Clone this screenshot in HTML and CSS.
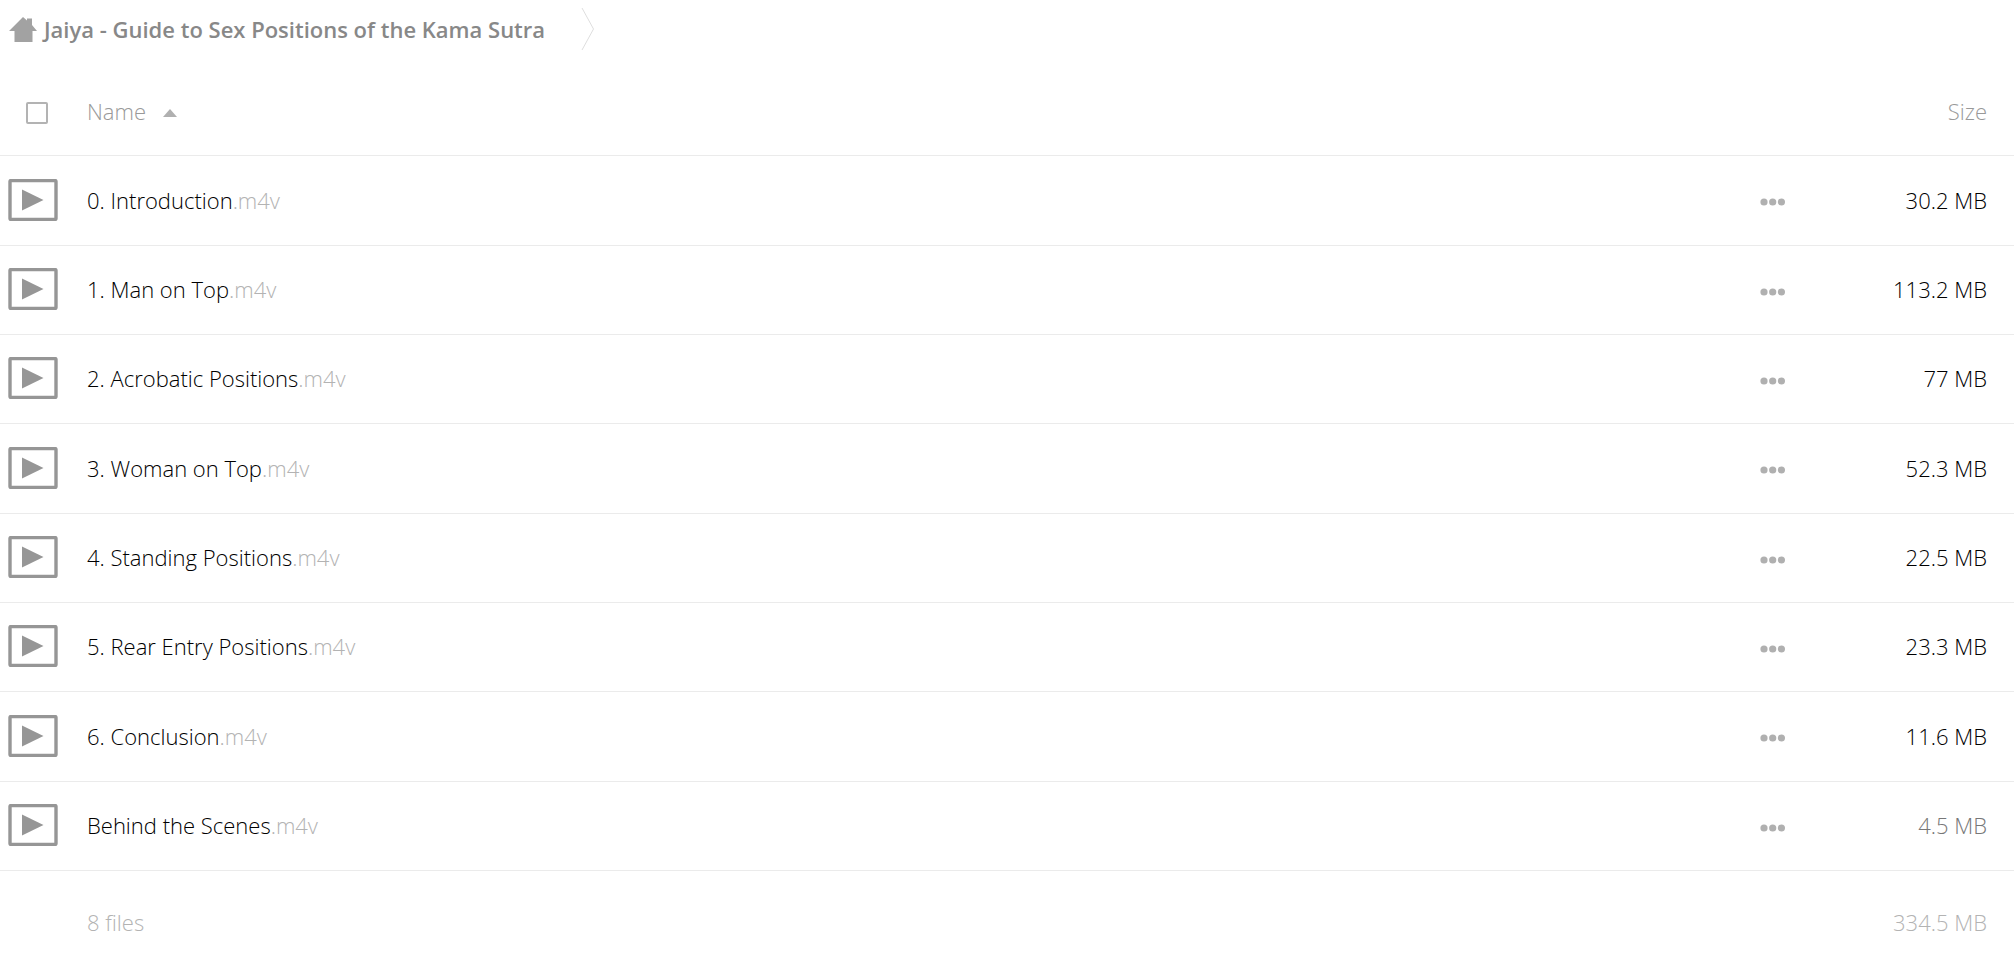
FILE: index.html
```html
<!DOCTYPE html>
<html lang="en">
<head>
    <meta charset="UTF-8">
    <meta name="viewport" content="width=device-width, initial-scale=1.0">
    <title>Files</title>
    <link rel="stylesheet" href="styles.css">
</head>
<body>
    <svg class="symbols" aria-hidden="true">
        <symbol id="video" viewBox="0 0 50 42">
            <rect x="2" y="1.5" width="46" height="39" rx="1" fill="none" stroke="#969696" stroke-width="3.4"/>
            <path d="M14 10.5v21l21.500-10.500z" fill="#969696"/>
        </symbol>
        <symbol id="dots" viewBox="0 0 26 8">
            <circle cx="4" cy="4" r="3.600" fill="#b0b0b0"/>
            <circle cx="12.700" cy="4" r="3.600" fill="#b0b0b0"/>
            <circle cx="21.400" cy="4" r="3.600" fill="#b0b0b0"/>
        </symbol>
    </svg>

    <nav class="breadcrumb">
        <a class="home" href="#" aria-label="Home">
            <svg width="28" height="25" viewBox="0 0 28 25"><path d="M14 0l4 3.500V1.500h5v6.500l5 6h-4.500V25h-18V14H0z" fill="#a2a2a2"/></svg>
        </a>
        <a class="crumb" href="#">Jaiya - Guide to Sex Positions of the Kama Sutra</a>
        <svg class="separator" width="14" height="42" viewBox="0 0 14 42"><path d="M1 0l11.500 21L1 42" fill="none" stroke="#dedede"/></svg>
    </nav>

    <table class="files">
        <thead>
            <tr>
                <th class="icon"><input class="select-all" type="checkbox" aria-label="Select all"></th>
                <th class="name"><button class="sort">Name <svg width="14" height="8" viewBox="0 0 14 8"><path d="M7 0l7 8H0z" fill="#b0b0b0"/></svg></button></th>
                <th class="actions"></th>
                <th class="size"><button class="sort">Size</button></th>
            </tr>
        </thead>
        <tbody>
            <tr>
                <td class="icon"><svg width="50" height="42"><use href="#video"/></svg></td>
                <td class="name"><a href="#">0. Introduction<span class="ext">.m4v</span></a></td>
                <td class="actions"><button class="more" aria-label="More"><svg width="26" height="8"><use href="#dots"/></svg></button></td>
                <td class="size">30.2 MB</td>
            </tr>
            <tr>
                <td class="icon"><svg width="50" height="42"><use href="#video"/></svg></td>
                <td class="name"><a href="#">1. Man on Top<span class="ext">.m4v</span></a></td>
                <td class="actions"><button class="more" aria-label="More"><svg width="26" height="8"><use href="#dots"/></svg></button></td>
                <td class="size">113.2 MB</td>
            </tr>
            <tr>
                <td class="icon"><svg width="50" height="42"><use href="#video"/></svg></td>
                <td class="name"><a href="#">2. Acrobatic Positions<span class="ext">.m4v</span></a></td>
                <td class="actions"><button class="more" aria-label="More"><svg width="26" height="8"><use href="#dots"/></svg></button></td>
                <td class="size">77 MB</td>
            </tr>
            <tr>
                <td class="icon"><svg width="50" height="42"><use href="#video"/></svg></td>
                <td class="name"><a href="#">3. Woman on Top<span class="ext">.m4v</span></a></td>
                <td class="actions"><button class="more" aria-label="More"><svg width="26" height="8"><use href="#dots"/></svg></button></td>
                <td class="size">52.3 MB</td>
            </tr>
            <tr>
                <td class="icon"><svg width="50" height="42"><use href="#video"/></svg></td>
                <td class="name"><a href="#">4. Standing Positions<span class="ext">.m4v</span></a></td>
                <td class="actions"><button class="more" aria-label="More"><svg width="26" height="8"><use href="#dots"/></svg></button></td>
                <td class="size">22.5 MB</td>
            </tr>
            <tr>
                <td class="icon"><svg width="50" height="42"><use href="#video"/></svg></td>
                <td class="name"><a href="#">5. Rear Entry Positions<span class="ext">.m4v</span></a></td>
                <td class="actions"><button class="more" aria-label="More"><svg width="26" height="8"><use href="#dots"/></svg></button></td>
                <td class="size">23.3 MB</td>
            </tr>
            <tr>
                <td class="icon"><svg width="50" height="42"><use href="#video"/></svg></td>
                <td class="name"><a href="#">6. Conclusion<span class="ext">.m4v</span></a></td>
                <td class="actions"><button class="more" aria-label="More"><svg width="26" height="8"><use href="#dots"/></svg></button></td>
                <td class="size">11.6 MB</td>
            </tr>
            <tr>
                <td class="icon"><svg width="50" height="42"><use href="#video"/></svg></td>
                <td class="name"><a href="#">Behind the Scenes<span class="ext">.m4v</span></a></td>
                <td class="actions"><button class="more" aria-label="More"><svg width="26" height="8"><use href="#dots"/></svg></button></td>
                <td class="size small">4.5 MB</td>
            </tr>
        </tbody>
        <tfoot>
            <tr>
                <td class="icon"></td>
                <td class="name">8 files</td>
                <td class="actions"></td>
                <td class="size">334.5 MB</td>
            </tr>
        </tfoot>
    </table>
</body>
</html>
```
FILE: styles.css
```css
body {
    margin: 0;
    background-color: #fff;
    color: #000;
    font-family: "Open Sans", sans-serif;
    font-size: 22px;
    font-weight: 300;
    line-height: 30px;
}

a {
    color: inherit;
    text-decoration: none;
}

button {
    padding: 0;
    border: none;
    background: none;
    color: inherit;
    font: inherit;
    cursor: pointer;
}

svg {
    display: block;
}

.symbols {
    display: none;
}

.breadcrumb {
    display: flex;
    align-items: center;
    height: 58px;
    padding-left: 9px;
}

.crumb {
    margin: 0 36px 0 7px;
    color: #888;
    font-weight: 600;
}

.files {
    width: 100%;
    table-layout: fixed;
    border-collapse: separate;
    border-spacing: 0;
}

th,
td {
    box-sizing: border-box;
    height: 89px;
    padding: 0 0 2px;
    border-bottom: 1px solid #ebebeb;
    font-weight: 300;
    text-align: left;
    vertical-align: middle;
}

th {
    height: 98px;
    padding-top: 10px;
    color: #999;
}

tbody tr:nth-child(3n+1) td {
    height: 90px;
}

tfoot td {
    height: 103px;
    border-bottom: none;
    color: #b3b3b3;
}

.icon {
    width: 87px;
    padding-left: 8px;
}

th.icon {
    padding-top: 14px;
    padding-left: 26px;
}

.actions {
    width: 90px;
}

.size {
    width: 164px;
    padding-right: 27px;
    text-align: right;
}

.small {
    color: #777;
}

.ext {
    color: #b3b3b3;
}

.sort {
    display: inline-flex;
    align-items: center;
    gap: 17px;
}

.sort svg {
    margin-top: 4px;
}

.more {
    display: block;
    padding-top: 5px;
}

.select-all {
    appearance: none;
    display: block;
    box-sizing: border-box;
    width: 22px;
    height: 22px;
    margin: 0;
    border: 2px solid #b3b3b3;
    border-radius: 2px;
}
```
